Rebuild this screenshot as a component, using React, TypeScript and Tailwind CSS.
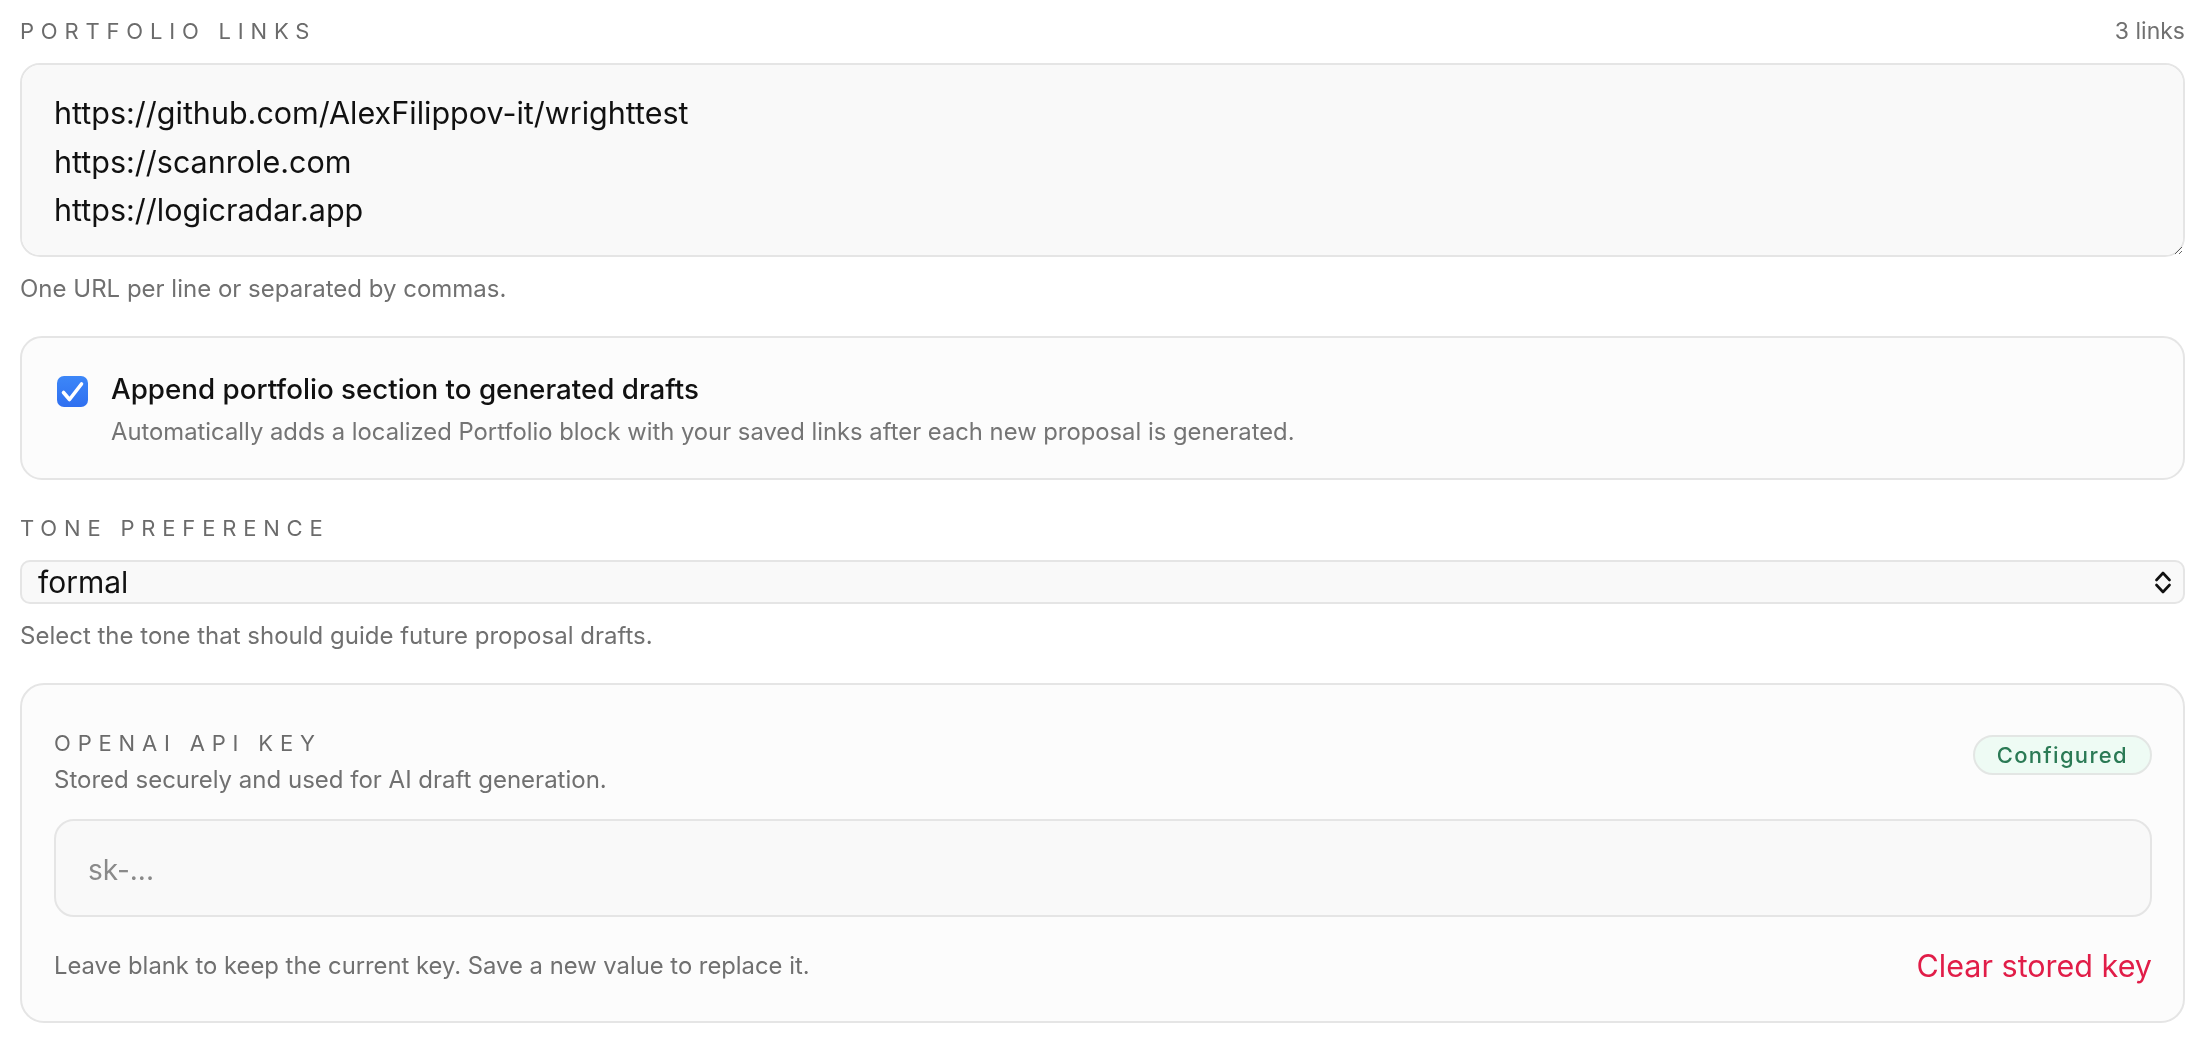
import React from "react";

function Chevrons() {
  return (
    <svg width="16" height="24" viewBox="0 0 16 24" fill="none" className="shrink-0">
      <path d="M1.5 10 L8 3 L14.5 10" stroke="#111" strokeWidth="2.6" strokeLinecap="round" strokeLinejoin="round" />
      <path d="M1.5 15 L8 22 L14.5 15" stroke="#111" strokeWidth="2.6" strokeLinecap="round" strokeLinejoin="round" />
    </svg>
  );
}

function Check() {
  return (
    <div className="mt-[5px] ml-[3px] flex h-[31px] w-[31px] shrink-0 items-center justify-center rounded-[7px] bg-gradient-to-b from-[#3d87f8] to-[#2f6ff0]">
      <svg width="31" height="31" viewBox="0 0 31 31" fill="none">
        <path d="M6.5 16.5 L12.5 23.5 L24.5 8" stroke="white" strokeWidth="3.6" strokeLinecap="round" strokeLinejoin="round" />
      </svg>
    </div>
  );
}

export default function App() {
  return (
    <div className="min-h-screen bg-white pl-5 pr-[23px] pt-4 font-['Inter','Noto_Sans',sans-serif] text-[#111]">
      <div className="flex items-center justify-between leading-[30px]">
        <span className="text-[22px] uppercase tracking-[0.31em] text-[#6b6b6b]">Portfolio Links</span>
        <span className="text-[23px] text-[#707070]">3 links</span>
      </div>

      <textarea
        className="mt-[17px] box-border block h-[194px] w-full resize-y rounded-[20px] border-2 border-[#e5e5e5] bg-[#f9f9f9] px-[32px] pb-[22px] pt-[24px] text-[30.5px] leading-[48.5px] text-[#111] outline-none"
        defaultValue={"https://github.com/AlexFilippov-it/wrighttest\nhttps://scanrole.com\nhttps://logicradar.app"}
      />

      <p className="mt-[17px] text-[24px] leading-[30px] text-[#707070]">One URL per line or separated by commas.</p>

      <div className="mt-[32px] flex gap-[23px] rounded-[22px] border-2 border-[#e5e5e5] bg-[#fcfcfc] pb-[29px] pl-[32px] pr-8 pt-[33px]">
        <Check />
        <div className="flex flex-col">
          <span className="text-[27.75px] font-medium leading-[36px] text-[#111]">Append portfolio section to generated drafts</span>
          <span className="mt-[8px] text-[23.8px] leading-[34px] text-[#747474]">
            Automatically adds a localized Portfolio block with your saved links after each new proposal is generated.
          </span>
        </div>
      </div>

      <div className="mt-[33px] text-[22px] uppercase leading-[30px] tracking-[0.31em] text-[#6b6b6b]">Tone Preference</div>

      <div className="mt-[17px] flex h-[44px] items-center justify-between rounded-[10px] border-2 border-[#e5e5e5] bg-[#f9f9f9] pl-[16px] pr-[12px]">
        <span className="text-[30px] leading-[36px] text-[#111]">formal</span>
        <Chevrons />
      </div>

      <p className="mt-[17px] text-[24px] leading-[30px] text-[#707070]">Select the tone that should guide future proposal drafts.</p>

      <div className="mt-[32px] rounded-[24px] border-2 border-[#e5e5e5] bg-[#fcfcfc] pb-[35px] pl-[32px] pr-[31px] pt-[43px]">
        <div className="flex items-start justify-between">
          <div className="flex flex-col">
            <span className="text-[22px] uppercase leading-[30px] tracking-[0.31em] text-[#6b6b6b]">OpenAI API Key</span>
            <span className="mt-[6px] text-[24px] leading-[32px] text-[#707070]">Stored securely and used for AI draft generation.</span>
          </div>
          <span className="mt-[7px] flex h-[40px] items-center rounded-full border-2 border-[#e3e6e4] bg-[#eefbf4] px-[22px] text-[22px] font-medium tracking-[0.06em] text-[#2b7a55]">
            Configured
          </span>
        </div>

        <input
          className="mt-[23px] box-border block h-[98px] w-full rounded-[20px] border-2 border-[#e5e5e5] bg-[#f9f9f9] px-[32px] pt-[3px] text-[28px] text-[#111] outline-none placeholder:text-[#8a8a8a]"
          placeholder="sk-..."
        />

        <div className="mt-[29px] flex items-center justify-between">
          <span className="text-[23.8px] leading-[32px] text-[#707070]">Leave blank to keep the current key. Save a new value to replace it.</span>
          <button className="text-[30.5px] leading-[40px] text-[#e11d48]">Clear stored key</button>
        </div>
      </div>
    </div>
  );
}
